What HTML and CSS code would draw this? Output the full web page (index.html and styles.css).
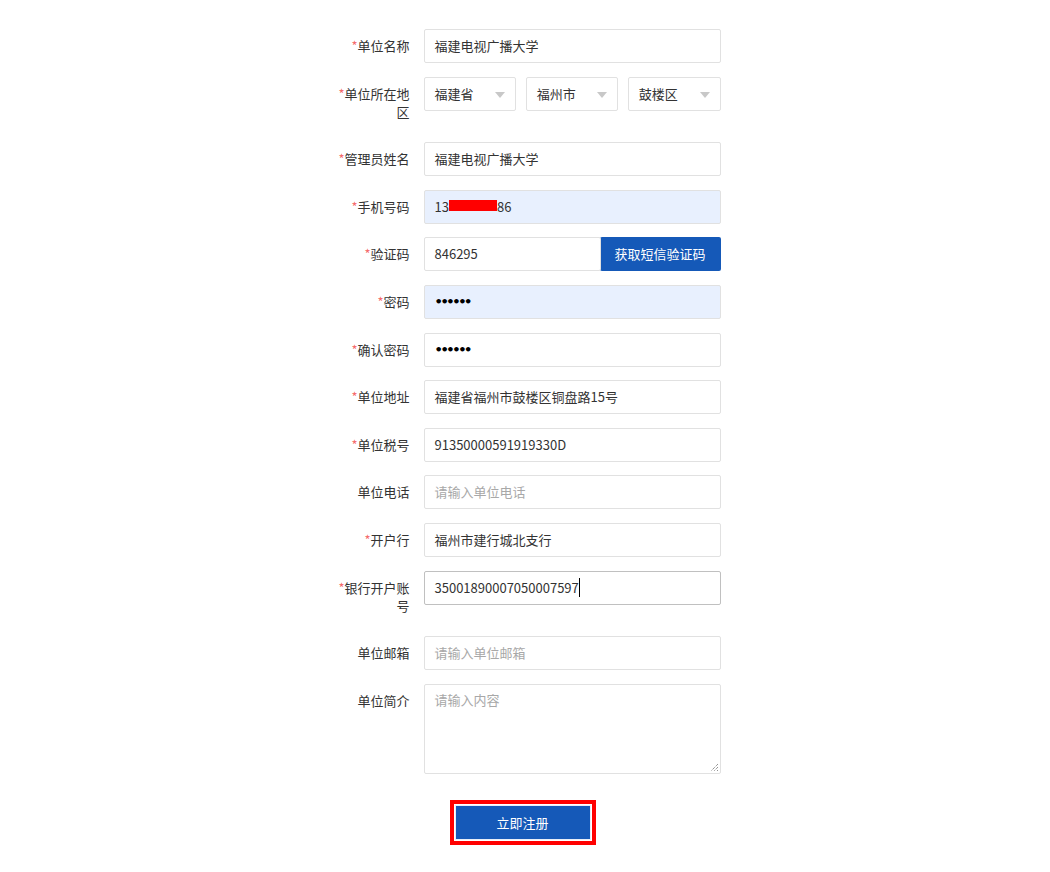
FILE: index.html
```html
<!DOCTYPE html>
<html lang="zh-CN">
<head>
<meta charset="utf-8">
<title>单位注册</title>
<link rel="stylesheet" href="styles.css">
</head>
<body>
<div class="form">
  <div class="row">
    <div class="label"><span class="req">*</span>单位名称</div>
    <div class="field"><div class="input">福建电视广播大学</div></div>
  </div>
  <div class="row">
    <div class="label"><span class="req">*</span>单位所在地区</div>
    <div class="field selects">
      <div class="input select">福建省<i class="arrow"></i></div>
      <div class="input select">福州市<i class="arrow"></i></div>
      <div class="input select">鼓楼区<i class="arrow"></i></div>
    </div>
  </div>
  <div class="row">
    <div class="label"><span class="req">*</span>管理员姓名</div>
    <div class="field"><div class="input">福建电视广播大学</div></div>
  </div>
  <div class="row">
    <div class="label"><span class="req">*</span>手机号码</div>
    <div class="field"><div class="input autofill">13<span class="mask"></span>86</div></div>
  </div>
  <div class="row">
    <div class="label"><span class="req">*</span>验证码</div>
    <div class="field code">
      <div class="input code-input">846295</div>
      <div class="code-btn">获取短信验证码</div>
    </div>
  </div>
  <div class="row">
    <div class="label"><span class="req">*</span>密码</div>
    <div class="field"><div class="input autofill dots">••••••</div></div>
  </div>
  <div class="row">
    <div class="label"><span class="req">*</span>确认密码</div>
    <div class="field"><div class="input dots">••••••</div></div>
  </div>
  <div class="row">
    <div class="label"><span class="req">*</span>单位地址</div>
    <div class="field"><div class="input">福建省福州市鼓楼区铜盘路15号</div></div>
  </div>
  <div class="row">
    <div class="label"><span class="req">*</span>单位税号</div>
    <div class="field"><div class="input">91350000591919330D</div></div>
  </div>
  <div class="row">
    <div class="label">单位电话</div>
    <div class="field"><div class="input placeholder">请输入单位电话</div></div>
  </div>
  <div class="row">
    <div class="label"><span class="req">*</span>开户行</div>
    <div class="field"><div class="input">福州市建行城北支行</div></div>
  </div>
  <div class="row">
    <div class="label"><span class="req">*</span>银行开户账号</div>
    <div class="field"><div class="input focused">35001890007050007597<span class="caret"></span></div></div>
  </div>
  <div class="row">
    <div class="label">单位邮箱</div>
    <div class="field"><div class="input placeholder">请输入单位邮箱</div></div>
  </div>
  <div class="row">
    <div class="label">单位简介</div>
    <div class="field">
      <div class="textarea placeholder">请输入内容
        <svg class="grip" width="10" height="10" viewBox="0 0 10 10"><path d="M9 2 L2 9 M9 5 L5 9 M9 8 L8 9" stroke="#666" stroke-width="1" stroke-dasharray="1 1" fill="none"/></svg>
      </div>
    </div>
  </div>
  <div class="actions">
    <div class="highlight">
      <div class="submit">立即注册</div>
    </div>
  </div>
</div>
</body>
</html>
```

FILE: styles.css
```css
* { box-sizing: border-box; }
html, body {
  margin: 0;
  background: #fff;
}
body {
  font-family: "Noto Sans CJK SC", "Liberation Sans", sans-serif;
  font-size: 13px;
  color: #333;
}
.form {
  width: 391px;
  margin: 0 auto;
  padding-top: 29px;
  padding-bottom: 27px;
}
.row {
  display: flex;
  align-items: flex-start;
  margin-bottom: 13.6px;
}
.label {
  width: 94px;
  flex: none;
  padding: 8px 14px 8px 0;
  line-height: 18px;
  text-align: right;
  color: #333;
}
.req {
  color: #f56c6c;
}
.field {
  width: 297px;
  flex: none;
}
.input {
  position: relative;
  height: 34px;
  line-height: 32px;
  padding: 0 10px;
  border: 1px solid #e1e1e1;
  border-radius: 2px;
  background: #fff;
  color: #333;
  white-space: nowrap;
}
.autofill {
  background: #e8f0fe;
}
.focused {
  border-color: #c0c0c0;
}
.placeholder {
  color: #a8a8a8;
}
.dots {
  font-family: "DejaVu Sans", sans-serif;
  font-size: 13px;
  font-weight: bold;
  letter-spacing: -2.4px;
  color: #000;
}
.mask {
  display: inline-block;
  width: 48px;
  height: 11px;
  background: #f00;
  vertical-align: middle;
  margin-top: -5px;
}
.caret {
  display: inline-block;
  width: 1px;
  height: 19px;
  background: #000;
  vertical-align: middle;
  margin-top: -3px;
}
.selects {
  display: flex;
  gap: 9.5px;
}
.select {
  flex: 1;
}
.arrow {
  position: absolute;
  right: 10px;
  top: 14px;
  width: 0;
  height: 0;
  border-left: 5px solid transparent;
  border-right: 5px solid transparent;
  border-top: 6px solid #c8c8c8;
}
.code {
  display: flex;
}
.code-input {
  flex: 1;
}
.code-btn {
  width: 121px;
  flex: none;
  margin-left: -1px;
  height: 34px;
  line-height: 34px;
  text-align: center;
  color: #fff;
  background: #1559b8;
  border-radius: 2px;
}
.textarea {
  position: relative;
  height: 90px;
  padding: 6px 10px;
  line-height: 18px;
  border: 1px solid #e1e1e1;
  border-radius: 2px;
}
.grip {
  position: absolute;
  right: 1px;
  bottom: 1px;
}
.actions {
  padding-top: 13px;
  padding-left: 120px;
}
.highlight {
  width: 146px;
  padding: 1px;
  border: 4px solid #ff0000;
}
.submit {
  height: 35px;
  line-height: 33px;
  text-align: center;
  color: #fff;
  background: #1559b8;
  border: 1px solid #e8eef8;
}
```
